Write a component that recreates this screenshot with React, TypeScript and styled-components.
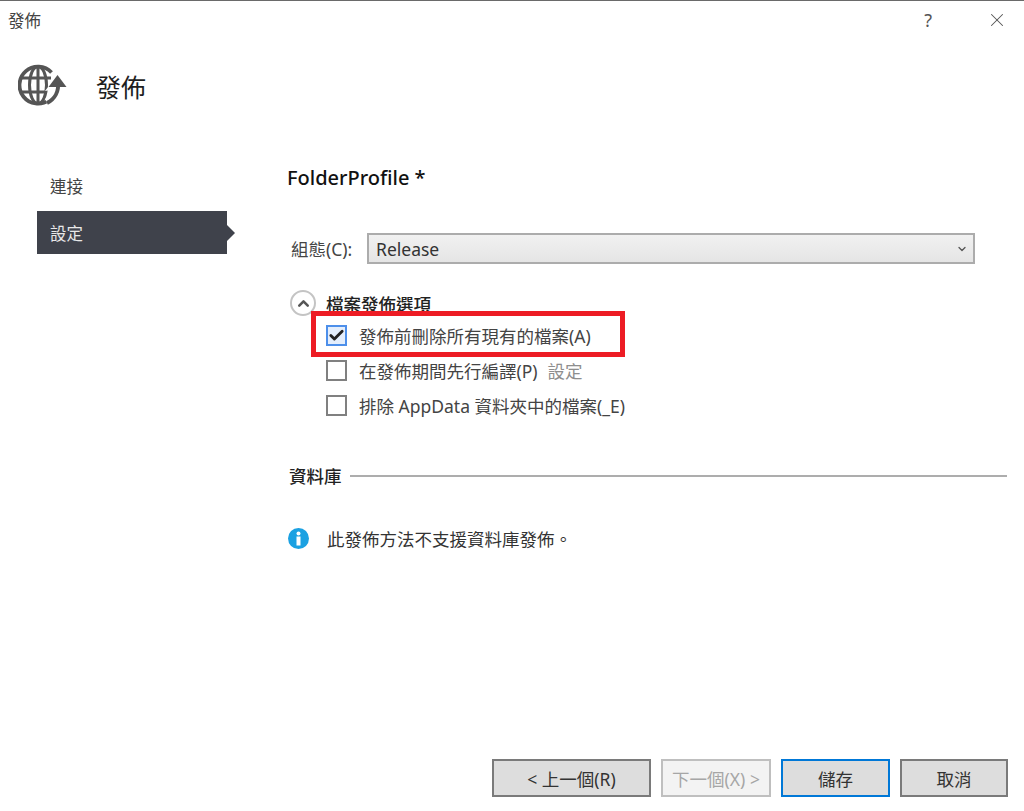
import styled, { createGlobalStyle } from 'styled-components'
import { Check, ChevronDown, ChevronUp, X } from 'lucide-react'

const GlobalStyle = createGlobalStyle`
  html, body {
    margin: 0;
    padding: 0;
    background: #fff;
  }
  * {
    box-sizing: border-box;
  }
`

const App = () => {
  return (
    <Dialog>
      <GlobalStyle />
      <TitleBar>
        <WindowTitle>發佈</WindowTitle>
        <HelpButton>?</HelpButton>
        <CloseButton>
          <X size={22} strokeWidth={1.1} />
        </CloseButton>
      </TitleBar>
      <Header>
        <GlobeIcon />
        <HeaderTitle>發佈</HeaderTitle>
      </Header>
      <Body>
        <Nav>
          <NavItem>連接</NavItem>
          <NavItem $active>設定</NavItem>
        </Nav>
        <Content>
          <ProfileName>FolderProfile *</ProfileName>
          <ConfigRow>
            <ConfigLabel>組態(C):</ConfigLabel>
            <Select>
              <span>Release</span>
              <ChevronDown size={12} strokeWidth={2.6} color="#555" />
            </Select>
          </ConfigRow>
          <OptionsHeader>
            <Toggler>
              <ChevronUp size={17} strokeWidth={3.6} color="#555" />
            </Toggler>
            <OptionsTitle>檔案發佈選項</OptionsTitle>
          </OptionsHeader>
          <Options>
            <OptionRow>
              <Checkbox $checked>
                <Check size={17} strokeWidth={4} color="#222" />
              </Checkbox>
              <OptionText>發佈前刪除所有現有的檔案(A)</OptionText>
              <Highlight />
            </OptionRow>
            <OptionRow>
              <Checkbox />
              <OptionText>在發佈期間先行編譯(P)</OptionText>
              <SettingsLink>設定</SettingsLink>
            </OptionRow>
            <OptionRow>
              <Checkbox />
              <OptionText>排除 AppData 資料夾中的檔案(_E)</OptionText>
            </OptionRow>
          </Options>
          <SectionHeader>
            <SectionTitle>資料庫</SectionTitle>
            <SectionLine />
          </SectionHeader>
          <InfoRow>
            <InfoIcon />
            <InfoText>此發佈方法不支援資料庫發佈。</InfoText>
          </InfoRow>
        </Content>
      </Body>
      <Footer>
        <FooterButton $width={159}>&lt; 上一個(R)</FooterButton>
        <FooterButton $width={110} $variant="disabled">
          下一個(X) &gt;
        </FooterButton>
        <FooterButton $width={109} $variant="default">
          儲存
        </FooterButton>
        <FooterButton $width={108}>取消</FooterButton>
      </Footer>
    </Dialog>
  )
}

const GlobeIcon = () => (
  <svg width="50" height="44" viewBox="0 0 50 44" fill="none">
    <g stroke="#555" strokeWidth="3">
      <path d="M33.500 8.500A18.500 18.500 0 1 0 31 36" strokeWidth="3.800" />
      <ellipse cx="20" cy="21" rx="8.500" ry="18.500" />
      <path d="M20 2.500v37M3 14h30M3 28h26" />
    </g>
    <path d="M40 18c1 9-3 17-11 21" stroke="#fff" strokeWidth="9" />
    <path d="M27 27l13-17 10 13z" fill="#fff" />
    <path d="M40 18c1 9-3 17-11 21" stroke="#555" strokeWidth="4" />
    <path d="M39.500 11l9 12h-18z" fill="#555" />
  </svg>
)

const InfoIcon = () => (
  <svg width="21" height="21" viewBox="0 0 21 21">
    <circle cx="10.500" cy="10.500" r="10.500" fill="#1ba1e2" />
    <circle cx="10.500" cy="5.500" r="2" fill="#fff" />
    <rect x="8.500" y="8.500" width="4" height="9" fill="#fff" />
  </svg>
)

const Dialog = styled.div`
  width: 1024px;
  height: 811px;
  display: flex;
  flex-direction: column;
  background: #fff;
  border-top: 1px solid #6a6a6a;
  color: #1e1e1e;
  font-family: 'Noto Sans', 'Noto Sans CJK TC', sans-serif;
  overflow: hidden;
`

const TitleBar = styled.div`
  height: 39px;
  display: flex;
  align-items: center;
  padding: 0 16px 1px 8px;
`

const WindowTitle = styled.div`
  flex: 1;
  font-size: 16.500px;
  color: #444;
`

const HelpButton = styled.div`
  font-size: 18px;
  color: #555;
  margin-right: 54px;
`

const CloseButton = styled.div`
  display: flex;
  color: #555;
`

const Header = styled.div`
  height: 52px;
  margin-top: 20px;
  display: flex;
  align-items: center;
  padding-left: 18px;
  gap: 28px;
`

const HeaderTitle = styled.h1`
  margin: 0;
  font-size: 25px;
  font-weight: 400;
  color: #1e1e1e;
`

const Body = styled.div`
  flex: 1;
  display: flex;
  min-height: 0;
`

const Nav = styled.div`
  width: 250px;
  padding: 52px 0 0 37px;
  display: flex;
  flex-direction: column;
  gap: 4px;
`

const NavItem = styled.div<{ $active?: boolean }>`
  position: relative;
  width: 190px;
  height: 43px;
  padding-left: 13px;
  display: flex;
  align-items: center;
  font-size: 16.500px;
  color: ${(props) => (props.$active ? '#e8e8e8' : '#444')};
  background: ${(props) => (props.$active ? '#3f424b' : 'transparent')};
  &::after {
    content: '';
    display: ${(props) => (props.$active ? 'block' : 'none')};
    position: absolute;
    left: 100%;
    top: 14px;
    border-left: 8px solid #3f424b;
    border-top: 8px solid transparent;
    border-bottom: 8px solid transparent;
  }
`

const Content = styled.div`
  flex: 1;
  padding: 52px 17px 0 37px;
  display: flex;
  flex-direction: column;
`

const ProfileName = styled.div`
  font-size: 20px;
  font-weight: 500;
  line-height: 28px;
  color: #111;
`

const ConfigRow = styled.div`
  margin-top: 41px;
  display: flex;
  align-items: center;
  padding: 0 32px 0 4px;
`

const ConfigLabel = styled.div`
  width: 76px;
  font-size: 17.500px;
  color: #444;
`

const Select = styled.div`
  flex: 1;
  height: 31px;
  padding: 0 5px 0 7px;
  display: flex;
  align-items: center;
  justify-content: space-between;
  font-size: 17.500px;
  color: #333;
  border: 2px solid #acacac;
  background: linear-gradient(#f1f1f1, #e5e5e5);
`

const OptionsHeader = styled.div`
  margin-top: 26px;
  display: flex;
  align-items: center;
  gap: 10px;
  padding-left: 3px;
`

const Toggler = styled.div`
  width: 26px;
  height: 26px;
  border-radius: 50%;
  border: 2px solid #c4c4c4;
  display: flex;
  align-items: center;
  justify-content: center;
`

const OptionsTitle = styled.div`
  font-size: 17.500px;
  font-weight: 500;
  color: #222;
`

const Options = styled.div`
  margin-top: 8px;
  padding-left: 39px;
  display: flex;
  flex-direction: column;
  gap: 13px;
`

const OptionRow = styled.div`
  position: relative;
  height: 22px;
  display: flex;
  align-items: center;
`

const Checkbox = styled.div<{ $checked?: boolean }>`
  width: 21px;
  height: 21px;
  flex: none;
  display: flex;
  align-items: center;
  justify-content: center;
  border: 2px solid ${(props) => (props.$checked ? '#4d8fea' : '#808080')};
  background: ${(props) => (props.$checked ? '#e4eefc' : '#fff')};
`

const OptionText = styled.div`
  margin-left: 12px;
  font-size: 17.500px;
  color: #444;
  white-space: nowrap;
`

const SettingsLink = styled.div`
  margin-left: 10px;
  font-size: 17.500px;
  color: #8e8e8e;
`

const Highlight = styled.div`
  position: absolute;
  left: -15px;
  top: -13px;
  width: 314px;
  height: 46px;
  border: 5px solid #ed1c24;
  pointer-events: none;
`

const SectionHeader = styled.div`
  margin-top: 47px;
  display: flex;
  align-items: center;
  gap: 8px;
  padding-left: 2px;
`

const SectionTitle = styled.div`
  font-size: 17.500px;
  font-weight: 500;
  color: #222;
`

const SectionLine = styled.div`
  flex: 1;
  height: 2px;
  background: #adadad;
`

const InfoRow = styled.div`
  margin-top: 38px;
  display: flex;
  align-items: center;
  gap: 18px;
  padding-left: 1px;
`

const InfoText = styled.div`
  font-size: 17.500px;
  color: #333;
`

const Footer = styled.div`
  display: flex;
  justify-content: flex-end;
  gap: 10px;
  padding: 0 16px 14px 0;
`

const FooterButton = styled.div<{ $width: number; $variant?: 'disabled' | 'default' }>`
  width: ${(props) => props.$width}px;
  height: 38px;
  display: flex;
  align-items: center;
  justify-content: center;
  font-size: 17.500px;
  color: ${(props) => (props.$variant === 'disabled' ? '#a6a6a6' : '#333')};
  background: ${(props) => (props.$variant === 'disabled' ? '#f3f3f3' : '#dddddd')};
  border: 2px solid
    ${(props) =>
      props.$variant === 'disabled' ? '#bfbfbf' : props.$variant === 'default' ? '#0078d7' : '#7a7a7a'};
`

export default App
